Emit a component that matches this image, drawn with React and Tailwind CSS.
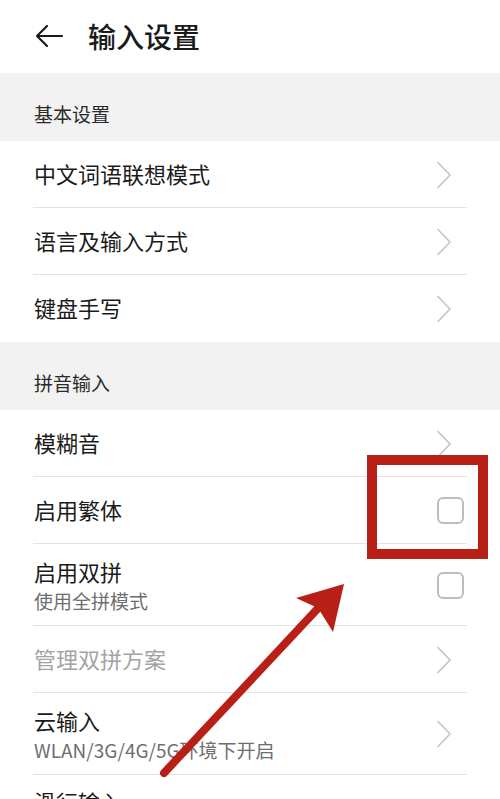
import React from "react";

const font = { fontFamily: '"Noto Sans CJK SC", "Noto Sans", sans-serif' };

function Chevron() {
  return (
    <svg width="16" height="28" viewBox="0 0 16 28" className="shrink-0">
      <path d="M2 1.5 L14 14 L2 26.5" fill="none" stroke="#c4c4c4" strokeWidth="1.6" strokeLinecap="round" strokeLinejoin="round" />
    </svg>
  );
}

function Checkbox() {
  return <div className="w-[27px] h-[27px] rounded-[6px] border-2 border-[#bdbdbd] shrink-0" />;
}

function Row({ title, sub, right = "chev", gray, h = "h-[67px]", last }) {
  return (
    <div className={`flex items-center pl-[34px] pr-[48px] ${h} relative`}>
      <div className={`flex-1 flex flex-col justify-center ${sub ? "" : "pb-[3px]"}`}>
        <div className={`text-[22px] leading-[30px] ${gray ? "text-[#a3a3a3]" : "text-[#1a1a1a]"}`}>{title}</div>
        {sub && <div className="text-[19px] leading-[26px] text-[#6e6e6e] mt-[2px]">{sub}</div>}
      </div>
      {right === "chev" ? <Chevron /> : <div className="-mr-[12px]"><Checkbox /></div>}
      {!last && <div className="absolute left-[33px] right-[33px] bottom-0 h-px bg-[#e3e3e3]" />}
    </div>
  );
}

function Section({ title }) {
  return (
    <div className="bg-[#f2f2f2] h-[68px] flex items-end pb-[13px] pl-[34px]">
      <span className="text-[19px] leading-[28px] text-[#2a2a2a]">{title}</span>
    </div>
  );
}

export default function App() {
  return (
    <div className="w-[500px] h-[799px] bg-white overflow-hidden relative" style={font}>
      <div className="h-[73px] flex items-center pl-[34px] pb-[2px]">
        <svg width="30" height="24" viewBox="0 0 30 24">
          <path d="M28 12 H3 M13 2 L3 12 L13 22" fill="none" stroke="#1a1a1a" strokeWidth="2.2" strokeLinecap="round" strokeLinejoin="round" />
        </svg>
        <span className="ml-[24px] text-[28px] leading-[36px] text-[#1a1a1a] font-medium">输入设置</span>
      </div>
      <Section title="基本设置" />
      <Row title="中文词语联想模式" />
      <Row title="语言及输入方式" />
      <Row title="键盘手写" last />
      <Section title="拼音输入" />
      <Row title="模糊音" />
      <Row title="启用繁体" right="check" />
      <Row title="启用双拼" sub="使用全拼模式" right="check" h="h-[82px]" />
      <Row title="管理双拼方案" gray />
      <Row title="云输入" sub="WLAN/3G/4G/5G环境下开启" h="h-[82px]" />
      <div className="pl-[34px] pt-[11px] text-[22px] leading-[30px] text-[#1a1a1a]">滑行输入</div>

      {/* annotation overlay */}
      <div className="absolute left-[367px] top-[455px] w-[121px] h-[104px] border-[10px] border-[#b81f17]" />
      <svg className="absolute left-0 top-0 pointer-events-none" width="500" height="799" viewBox="0 0 500 799">
        <line x1="164" y1="773" x2="322" y2="604" stroke="#b81f17" strokeWidth="8" strokeLinecap="round" />
        <polygon points="344,584 296,598 318,608 333,632" fill="#b81f17" />
      </svg>
    </div>
  );
}
